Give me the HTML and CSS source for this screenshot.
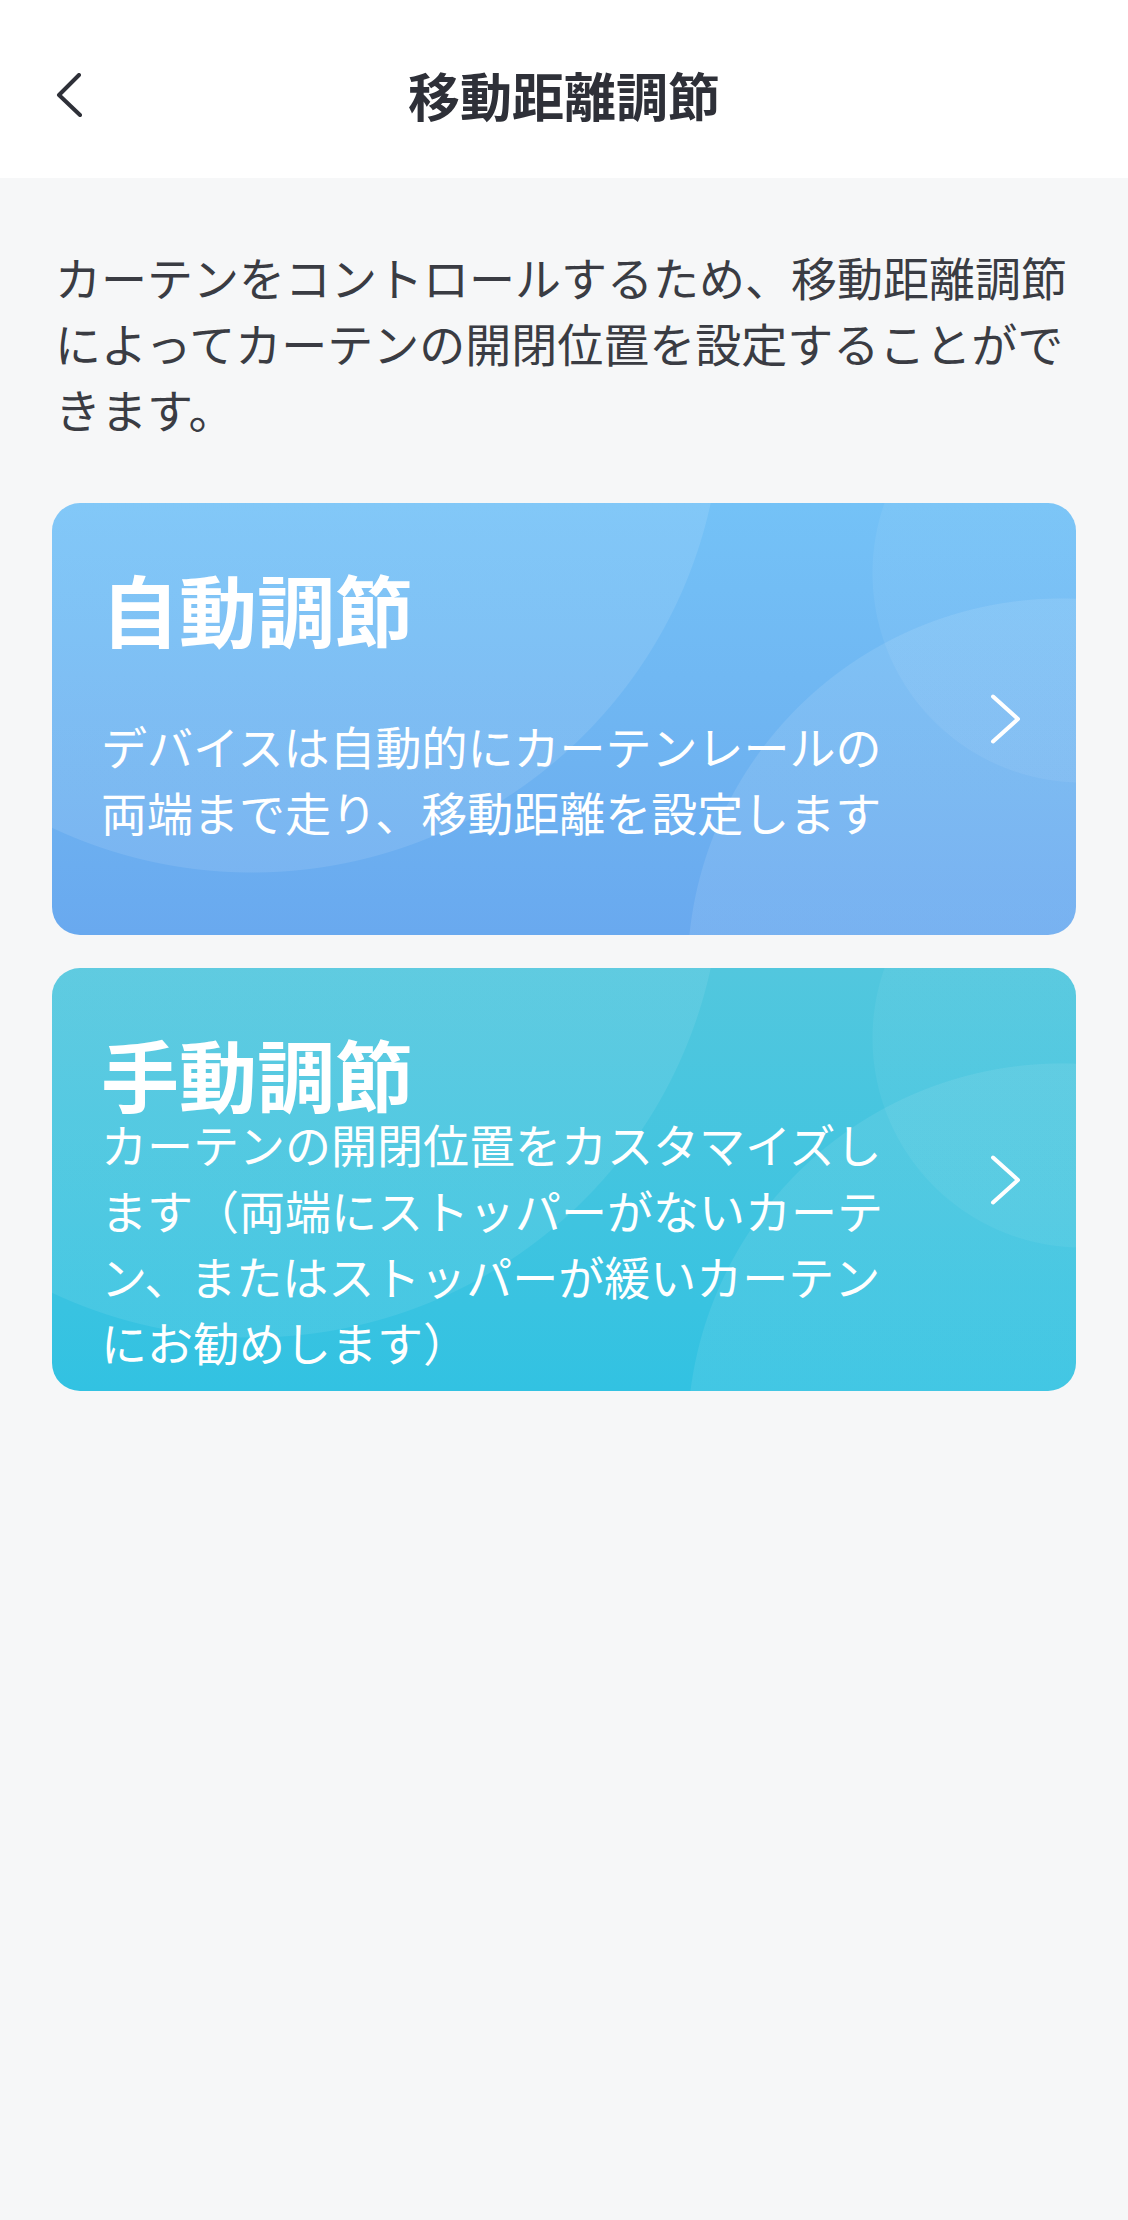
FILE: index.html
```html
<!DOCTYPE html>
<html lang="ja">
<head>
<meta charset="utf-8">
<title>移動距離調節</title>
<link rel="stylesheet" href="styles.css">
</head>
<body>
<header class="nav">
  <div class="nav-side">
    <svg class="back-icon" viewBox="0 0 30 44" width="30" height="44" aria-hidden="true">
      <path d="M25 2 L5 22 L26 42" fill="none" stroke="#2e3038" stroke-width="4" stroke-linecap="round" stroke-linejoin="round"/>
    </svg>
  </div>
  <h1 class="nav-title">移動距離調節</h1>
  <div class="nav-side"></div>
</header>
<main class="content">
  <p class="intro">カーテンをコントロールするため、移動距離調節によってカーテンの開閉位置を設定することができます。</p>

  <div class="card card-auto">
    <div class="card-body">
      <h2 class="card-title">自動調節</h2>
      <p class="card-desc">デバイスは自動的にカーテンレールの両端まで走り、移動距離を設定します</p>
    </div>
    <svg class="card-arrow" viewBox="0 0 32 52" width="32" height="52" aria-hidden="true">
      <path d="M4 3.5 L29 26 L4 48.5" fill="none" stroke="#ffffff" stroke-width="4" stroke-linecap="round" stroke-linejoin="round"/>
    </svg>
  </div>

  <div class="card card-manual">
    <div class="card-body">
      <h2 class="card-title">手動調節</h2>
      <p class="card-desc">カーテンの開閉位置をカスタマイズします（両端にストッパーがないカーテン、またはストッパーが緩いカーテンにお勧めします）</p>
    </div>
    <svg class="card-arrow" viewBox="0 0 32 52" width="32" height="52" aria-hidden="true">
      <path d="M4 3.5 L29 26 L4 48.5" fill="none" stroke="#ffffff" stroke-width="4" stroke-linecap="round" stroke-linejoin="round"/>
    </svg>
  </div>
</main>
</body>
</html>
```
FILE: styles.css
```css
html, body {
  margin: 0;
  padding: 0;
}
body {
  background: #f6f7f8;
  font-family: "Noto Sans CJK JP", "Noto Sans", sans-serif;
  width: 1128px;
  min-height: 2220px;
}
.nav {
  background: #ffffff;
  height: 178px;
  box-sizing: border-box;
  padding-top: 12px;
  display: grid;
  grid-template-columns: 1fr auto 1fr;
  align-items: center;
}
.nav-side {
  display: flex;
  align-items: center;
  padding-left: 54px;
}
.back-icon {
  display: block;
}
.nav-title {
  margin: 0;
  font-size: 52px;
  line-height: 1;
  font-weight: 700;
  color: #2e3038;
}
.content {
  padding: 0 52px;
}
.intro {
  margin: 65px 0 0;
  padding-left: 3px;
  font-size: 46px;
  line-height: 66px;
  color: #3a3c43;
}
.card {
  margin-top: 62px;
  border-radius: 28px;
  display: flex;
  align-items: center;
  justify-content: space-between;
  padding: 0 55px 0 49px;
  color: #ffffff;
  overflow: hidden;
}
.card-auto {
  background:
    radial-gradient(circle 210px at 1030px 70px, rgba(255,255,255,0.06) 209px, rgba(255,255,255,0) 210px),
    radial-gradient(circle 375px at 1010px 470px, rgba(255,255,255,0.10) 374px, rgba(255,255,255,0) 375px),
    radial-gradient(circle 470px at 200px -100px, rgba(255,255,255,0.10) 469px, rgba(255,255,255,0) 470px),
    linear-gradient(180deg, #74c2f7 0%, #6eb3f1 60%, #69a9ef 100%);
}
.card-manual {
  margin-top: 33px;
  background:
    radial-gradient(circle 210px at 1030px 70px, rgba(255,255,255,0.05) 209px, rgba(255,255,255,0) 210px),
    radial-gradient(circle 375px at 1010px 470px, rgba(255,255,255,0.08) 374px, rgba(255,255,255,0) 375px),
    radial-gradient(circle 470px at 200px -100px, rgba(255,255,255,0.08) 469px, rgba(255,255,255,0) 470px),
    linear-gradient(180deg, #52c7de 0%, #3fc4e0 60%, #32c2e2 100%);
}
.card-body {
  flex: 0 0 auto;
  width: 800px;
  padding-top: 68px;
}
.card-auto .card-body {
  padding-bottom: 91px;
}
.card-manual .card-body {
  padding-bottom: 17px;
}
.card-title {
  margin: 0;
  font-size: 78px;
  line-height: 74px;
  font-weight: 700;
  color: #ffffff;
}
.card-desc {
  margin: 0;
  font-size: 46px;
  line-height: 66px;
  font-weight: 400;
  color: #ffffff;
}
.card-auto .card-desc {
  margin-top: 67px;
}
.card-arrow {
  display: block;
  flex: 0 0 auto;
}
```
